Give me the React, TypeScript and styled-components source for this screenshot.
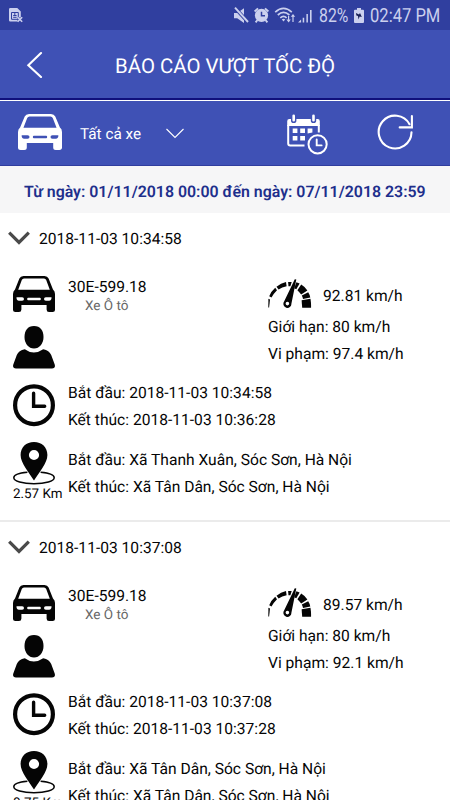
import React from "react";
import styled, { createGlobalStyle } from "styled-components";

const GlobalStyle = createGlobalStyle`
  * { box-sizing: border-box; }
  html, body { margin: 0; padding: 0; overflow: hidden; }
  body {
    background: #fff;
    font-family: Roboto, "Liberation Sans", sans-serif;
    color: #050505;
    text-rendering: geometricPrecision;
  }
  svg { display: block; flex: none; }
`;

const Screen = styled.div`
  width: 450px;
  height: 800px;
  overflow: hidden;
  display: flex;
  flex-direction: column;
  background: #fff;
`;

const StatusBar = styled.div`
  height: 30px;
  flex: none;
  display: flex;
  align-items: center;
  justify-content: space-between;
  padding: 1px 10px 0 9px;
  background: #303f9f;
  color: #cbd0ee;
`;

const StatusGroup = styled.div`
  display: flex;
  align-items: center;
`;

const StatusText = styled.span<{ $width: number; $scale: number; $gap: number }>`
  width: ${(p) => p.$width}px;
  margin-left: ${(p) => p.$gap}px;
  font-size: 19.5px;
  line-height: 28px;
  white-space: nowrap;
  transform: scaleX(${(p) => p.$scale});
  transform-origin: left center;
`;

const TitleBar = styled.header`
  height: 70px;
  flex: none;
  display: flex;
  align-items: center;
  padding: 0 0 0 26px;
  background: #3f51b5;
  border-bottom: 2px solid #10107c;
`;

const Title = styled.h1`
  margin: 3px 0 0 72px;
  font-size: 20.4px;
  font-weight: 400;
  line-height: 30px;
  color: #fff;
  white-space: nowrap;
`;

const Toolbar = styled.div`
  height: 66px;
  flex: none;
  display: flex;
  align-items: flex-start;
  background: #3f51b5;
  border-top: 1px solid #fff;
  border-bottom: 1px solid #303d9e;
  padding: 13px 0 0 18px;
  color: #fff;
`;

const VehicleFilter = styled.div`
  display: flex;
  width: 269px;
`;

const FilterLabel = styled.span`
  width: 86px;
  margin: 10px 0 0 18px;
  font-size: 15.3px;
  line-height: 20px;
`;

const FilterArrow = styled.span`
  margin-top: 14px;
`;

const ToolIcons = styled.div`
  display: flex;
  gap: 49px;
`;

const DateRange = styled.div`
  height: 47px;
  flex: none;
  display: flex;
  align-items: center;
  padding: 4px 0 0 24px;
  background: #f6f6f7;
  color: #1e2f8c;
  font-size: 15.9px;
  font-weight: 600;
  white-space: nowrap;
`;

const Entry = styled.article`
  height: 309px;
  flex: none;
  border-bottom: 2px solid #ebebeb;
`;

const EntryHead = styled.div`
  height: 50px;
  display: flex;
  align-items: center;
  gap: 9px;
  padding: 1px 0 0 8px;
`;

const Line = styled.div`
  height: 27px;
  padding-top: 1px;
  font-size: 15.6px;
  line-height: 27px;
  white-space: nowrap;
`;

const Columns = styled.div`
  display: grid;
  grid-template-columns: 55px 200px 1fr;
  height: 108px;
  padding: 13px 0 0 13px;
`;

const IconStack = styled.div`
  display: flex;
  flex-direction: column;
  gap: 14px;
`;

const Plate = styled.div`
  margin-top: -3px;
`;

const VehicleType = styled.div`
  padding-left: 17px;
  font-size: 13.5px;
  line-height: 18px;
  margin-top: -3px;
  color: #666;
`;

const Speeds = styled.div`
  padding-top: 3px;
`;

const Gauge = styled.div`
  height: 34px;
  display: flex;
  align-items: flex-start;
  gap: 11px;
`;

const GaugeValue = styled(Line)`
  margin-top: 3px;
`;

const Detail = styled.div<{ $height: number }>`
  display: flex;
  height: ${(p) => p.$height}px;
  padding: 13px 0 0 13px;
`;

const DetailIcon = styled.div`
  width: 55px;
  flex: none;
`;

const DetailLines = styled.div<{ $offset: number }>`
  margin-top: ${(p) => p.$offset}px;
`;

const Distance = styled.div`
  font-size: 13.4px;
  line-height: 16px;
  margin-top: 2px;
  white-space: nowrap;
`;

const CarIcon = ({ width, height, hole }: { width: number; height: number; hole: string }) => (
  <svg width={width} height={height} viewBox="0 0 42 36" preserveAspectRatio="none">
    <path
      fill="currentColor"
      fillRule="evenodd"
      d="M10.5 0H31.5Q34.5 0 35.6 2.5L40 13.5Q42 15 42 18V33.5Q42 36 39.5 36H36Q33.6 36 33.6 33.5V29H8.4V33.5Q8.4 36 6 36H2.5Q0 36 0 33.5V18Q0 15 2 13.5L6.4 2.5Q7.5 0 10.5 0ZM11 2.6Q9.4 2.6 8.8 4.1L5.2 13.7H36.8L33.2 4.1Q32.6 2.6 31 2.6Z"
    />
    <g fill={hole}>
      <path d="M3.5 21.2H9.2Q11 21.2 11 23Q11 24.7 9.2 24.7H6Q3.3 24.3 3.5 21.2Z" />
      <path d="M38.5 21.2H32.8Q31 21.2 31 23Q31 24.7 32.8 24.7H36Q38.7 24.3 38.5 21.2Z" />
      <rect x="14.2" y="21.8" width="13.6" height="2.4" rx="0.9" />
    </g>
  </svg>
);

const PersonIcon = () => (
  <svg width="42" height="43" viewBox="0 0 42 43" fill="currentColor">
    <path d="M21 0C27.4 0 30.5 4.7 30.5 11C30.5 17.6 26.5 22.5 21 22.5S11.5 17.6 11.5 11C11.5 4.7 14.6 0 21 0Z" />
    <path d="M11.8 23.2Q20.8 29.8 30.2 23.2Q36.3 24.5 38.2 29L41.7 38.5Q42.8 42.4 39 42.4H3Q-.8 42.4.3 38.5L3.8 29Q5.7 24.5 11.8 23.2Z" />
  </svg>
);

const ClockIcon = () => (
  <svg width="42" height="43" viewBox="0 0 42 43" fill="none" stroke="currentColor">
    <circle cx="21" cy="21.2" r="18.9" strokeWidth="4.2" />
    <path d="M20.6 9.3V22.3H31.7" strokeWidth="3.4" strokeLinecap="round" />
  </svg>
);

const PinIcon = () => (
  <svg width="42" height="43" viewBox="0 0 42 43">
    <path
      d="M14.4 30.3C6 31 .8 33 .8 35.7C.8 39.2 9.6 41.8 21 41.8S41.2 39.2 41.2 35.7C41.2 33 36 31 27.6 30.3"
      fill="none"
      stroke="currentColor"
      strokeWidth="1.5"
    />
    <path
      fill="currentColor"
      fillRule="evenodd"
      d="M21 0C28.8 0 34.4 5.3 34.4 13C34.4 21.3 26 30.4 21 38.6C16 30.4 7.6 21.3 7.6 13C7.6 5.3 13.2 0 21 0ZM21 7.9A5.1 5.1 0 1 0 21 18.1A5.1 5.1 0 1 0 21 7.9Z"
    />
  </svg>
);

const GaugeIcon = () => (
  <svg width="44" height="30" viewBox="0 0 44 30" fill="currentColor">
    <path d="M.4 19.8L2 20.4L1.1 28.5H.3Z" />
    <path d="M1.2 17.3L3.5 18.6Q5.7 14.4 9 11.2L7.2 8.8Q3 12.5 1.2 17.3Z" />
    <path d="M8.5 7.7L10.6 10.6Q14 8 18.6 7.2L18 3Q12.8 4 8.5 7.7Z" />
    <path d="M20.1 3L20.5 7.2L22.4 7.3L23.7 3Z" />
    <path d="M28.4 3.3L31.6 4.5L28.3 10.2L26.2 9.2Z" />
    <path d="M33.2 5.4Q37 7.6 39.4 11.5L33.2 15.4Q31.3 13 29.4 11.2Z" />
    <path d="M40.2 13.2Q41.7 15.5 42.3 18.4L35 20Q34.7 18.2 33.8 16.6Z" />
    <path d="M42.5 19.8Q43.1 23 43.1 28.7H34.2L33.6 21.3Z" />
    <path
      fillRule="evenodd"
      d="M26.8 .2L28.3.5L23.4 24.7A4 4 0 1 1 16.1 22.6ZM19.4 22.8A1.8 1.8 0 1 0 19.4 26.4A1.8 1.8 0 1 0 19.4 22.8Z"
    />
  </svg>
);

const BackIcon = () => (
  <svg width="17" height="28" viewBox="0 0 17 28" fill="none" stroke="#fff" strokeWidth="2.1" strokeLinecap="round">
    <path d="M15 3L2.3 15.2L15 27" />
  </svg>
);

const CalendarClockIcon = () => (
  <svg width="41" height="41" viewBox="0 0 41 41" fill="none" stroke="#fff">
    <path
      fill="#fff"
      stroke="none"
      d="M2.3 5.1H4V6.4Q4 9 6.7 9T9.4 6.4V5.1H23.8V6.4Q23.8 9 26.5 9T29.2 6.4V5.1H30.7Q32.8 5.1 32.8 7.3V12.1H.2V7.3Q.2 5.1 2.3 5.1Z"
    />
    <path d="M6.7 1.7V6.2M26.5 1.7V6.2" strokeWidth="2.6" strokeLinecap="round" />
    <path d="M1.2 11V29.5Q1.2 31.5 3.2 31.5H17.5M31.8 11V18.4" strokeWidth="2" />
    <g fill="#fff" stroke="none">
      <path d="M5.7 14.4h4.7v4.6H5.7zM13.2 14.4h4.8v4.6h-4.8zM20.6 14.4h4.8v4.2l-4.8 1zM5.7 22h4.7v4.6H5.7zM13.2 22h4.8v4.6h-4.8z" />
    </g>
    <circle cx="30.6" cy="30.3" r="9.1" strokeWidth="2" />
    <path d="M29.7 25.4V31.4H34.6" strokeWidth="1.9" strokeLinecap="round" />
  </svg>
);

const RefreshIcon = () => (
  <svg width="38" height="37" viewBox="0 0 38 37" fill="none" stroke="#fff" strokeWidth="2.1" strokeLinecap="round">
    <path d="M34.5 18.3A16.4 16.4 0 1 1 32.5 10.2" />
    <path d="M34.9 2.1V13.4H22.7" />
  </svg>
);

const StatusIcons = () => (
  <svg width="80" height="18" viewBox="0 0 80 18" fill="currentColor">
    <path d="M0 6H3.2L10 1.3V16L3.2 11.3H0Z" />
    <path d="M1 1L14.5 15.5" stroke="#303f9f" strokeWidth="3.6" />
    <path d="M1 .6L14 15" stroke="currentColor" strokeWidth="1.9" />
    <circle cx="27.5" cy="8.4" r="6.6" />
    <path d="M20.6 4.5L24 1.4M34.4 4.5L31 1.4M23.5 13L21.6 15.4M31.5 13L33.4 15.4" stroke="currentColor" strokeWidth="1.9" />
    <path d="M27.5 4.8V8.7H31" fill="none" stroke="#303f9f" strokeWidth="1.5" />
    <g fill="none" stroke="currentColor" strokeWidth="1.7">
      <path d="M41.2 5.2Q49.5-2.3 57.8 5.2" />
      <path d="M43.8 8Q49.5 2.8 55.4 8" />
      <path d="M46.3 10.8Q49.5 8 52.6 10.8" />
      <path d="M54.6 9V14.6M59 15V8.5" strokeWidth="1.2" />
    </g>
    <path d="M47.8 12.4Q49.5 11.2 51.2 12.4L49.5 14.6ZM52.4 12.5H56.8L54.6 15.4ZM56.8 9.8H61.2L59 7Z" />
    <path d="M64 15.6L67.1 12.5V15.6ZM68.7 10.8h1.5v4.8h-1.5zM72.4 7h1.5v8.6h-1.5zM76 3h1.6v12.6H76z" />
  </svg>
);

const BatteryIcon = () => (
  <svg width="10" height="15" viewBox="0 0 10 15">
    <path fill="currentColor" d="M3 0H7V1.7H9Q10 1.7 10 2.7V14Q10 15 9 15H1Q0 15 0 14V2.7Q0 1.7 1 1.7H3Z" />
    <path fill="#151c52" d="M2 5L5 6.5L6 5L7.8 9L5.6 8.5L4.5 11.6L4 8L2.4 7.6Z" />
  </svg>
);

const SimIcon = () => (
  <svg width="14" height="15" viewBox="0 0 14 15" fill="none">
    <path fill="currentColor" d="M1.2 0H8.3L11.8 3.4V9.5L8.5 9.3V13.4H1.2Q0 13.4 0 12.2V1.2Q0 0 1.2 0Z" />
    <path stroke="#303f9f" strokeWidth="1" d="M2.5 4.5H9.3V11.3H2.5ZM5.8 4.5V7.5M4.2 7.5H7.6M4.2 9.3H7.6" />
    <path stroke="currentColor" strokeWidth="1.6" d="M8.6 9.2L13.2 13.8M13.2 9.2L8.6 13.8" />
  </svg>
);

type Violation = {
  time: string;
  plate: string;
  speed: string;
  peak: string;
  end: string;
  from: string;
  to: string;
  distance: string;
};

const violations: Violation[] = [
  {
    time: "2018-11-03 10:34:58",
    plate: "30E-599.18",
    speed: "92.81 km/h",
    peak: "97.4 km/h",
    end: "2018-11-03 10:36:28",
    from: "Xã Thanh Xuân, Sóc Sơn, Hà Nội",
    to: "Xã Tân Dân, Sóc Sơn, Hà Nội",
    distance: "2.57 Km",
  },
  {
    time: "2018-11-03 10:37:08",
    plate: "30E-599.18",
    speed: "89.57 km/h",
    peak: "92.1 km/h",
    end: "2018-11-03 10:37:28",
    from: "Xã Tân Dân, Sóc Sơn, Hà Nội",
    to: "Xã Tân Dân, Sóc Sơn, Hà Nội",
    distance: "0.75 Km",
  },
];

const ViolationEntry = ({ item }: { item: Violation }) => (
  <Entry>
    <EntryHead>
      <svg width="22" height="15" viewBox="0 0 22 15" fill="none" stroke="#4a4a4a" strokeWidth="3.2">
        <path d="M1.2 1.6L11 11.5L20.8 1.6" />
      </svg>
      <Line>{item.time}</Line>
    </EntryHead>
    <Columns>
      <IconStack>
        <CarIcon width={42} height={36} hole="#fff" />
        <PersonIcon />
      </IconStack>
      <Plate>
        <Line>{item.plate}</Line>
        <VehicleType>Xe Ô tô</VehicleType>
      </Plate>
      <Speeds>
        <Gauge>
          <GaugeIcon />
          <GaugeValue>{item.speed}</GaugeValue>
        </Gauge>
        <Line>Giới hạn: 80 km/h</Line>
        <Line>Vi phạm: {item.peak}</Line>
      </Speeds>
    </Columns>
    <Detail $height={58}>
      <DetailIcon>
        <ClockIcon />
      </DetailIcon>
      <DetailLines $offset={-5}>
        <Line>Bắt đầu: {item.time}</Line>
        <Line>Kết thúc: {item.end}</Line>
      </DetailLines>
    </Detail>
    <Detail $height={75}>
      <DetailIcon>
        <PinIcon />
        <Distance>{item.distance}</Distance>
      </DetailIcon>
      <DetailLines $offset={4}>
        <Line>Bắt đầu: {item.from}</Line>
        <Line>Kết thúc: {item.to}</Line>
      </DetailLines>
    </Detail>
  </Entry>
);

export default function App() {
  return (
    <>
      <GlobalStyle />
      <Screen>
        <StatusBar>
          <SimIcon />
          <StatusGroup>
            <StatusIcons />
            <StatusText $width={35} $scale={0.81} $gap={5}>82%</StatusText>
            <BatteryIcon />
            <StatusText $width={70} $scale={0.85} $gap={6}>02:47 PM</StatusText>
          </StatusGroup>
        </StatusBar>
        <TitleBar>
          <BackIcon />
          <Title>BÁO CÁO VƯỢT TỐC ĐỘ</Title>
        </TitleBar>
        <Toolbar>
          <VehicleFilter>
            <CarIcon width={44} height={36} hole="#3f51b5" />
            <FilterLabel>Tất cả xe</FilterLabel>
            <FilterArrow>
              <svg width="18" height="11" viewBox="0 0 18 11" fill="none" stroke="#fff" strokeWidth="1.1">
                <path d="M.5 1L9 9.5L17.5 1" />
              </svg>
            </FilterArrow>
          </VehicleFilter>
          <ToolIcons>
            <CalendarClockIcon />
            <RefreshIcon />
          </ToolIcons>
        </Toolbar>
        <DateRange>Từ ngày: 01/11/2018 00:00 đến ngày: 07/11/2018 23:59</DateRange>
        {violations.map((item) => (
          <ViolationEntry key={item.time} item={item} />
        ))}
      </Screen>
    </>
  );
}
